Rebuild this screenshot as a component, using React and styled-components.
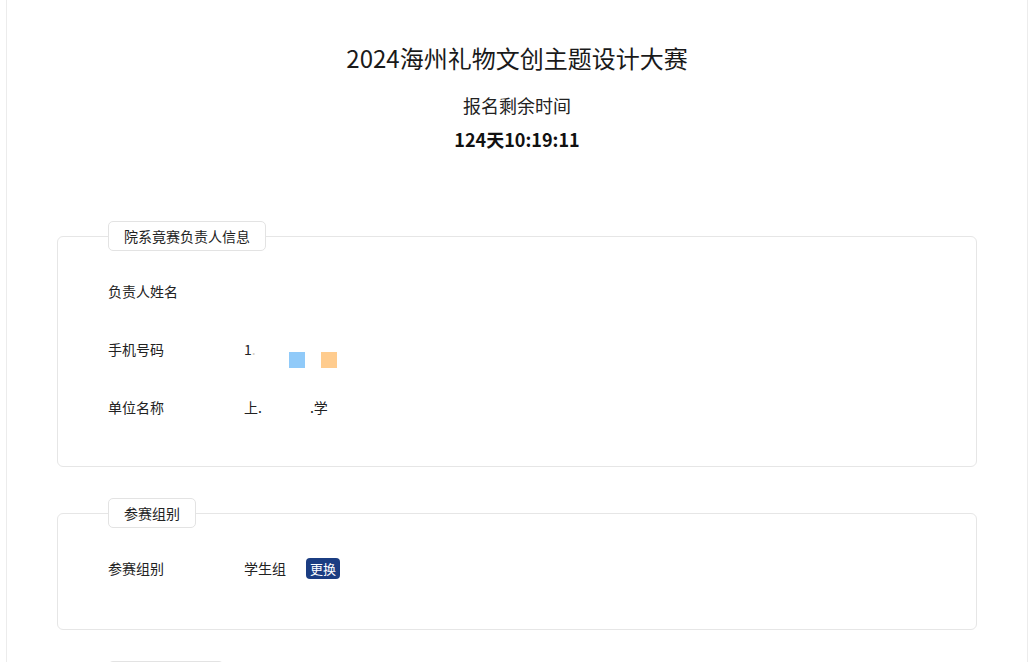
import styled, { createGlobalStyle } from "styled-components";

const GlobalStyle = createGlobalStyle`
  html, body {
    margin: 0;
    padding: 0;
    background: #fff;
  }
  body {
    font-family: "Noto Sans CJK SC", "Noto Sans", sans-serif;
    color: #222;
  }
`;

const Frame = styled.div`
  margin: 0 6px 0 6px;
  min-height: 662px;
  border-left: 1px solid #ececec;
  border-right: 1px solid #ececec;
  padding: 0 50px;
  box-sizing: border-box;
  overflow: hidden;
`;

const Header = styled.header`
  display: flex;
  flex-direction: column;
  align-items: center;
  padding-top: 42px;
  margin-bottom: 85px;
`;

const Title = styled.h1`
  margin: 0;
  font-size: 24px;
  line-height: 32px;
  font-weight: 400;
  color: #1a1a1a;
`;

const Subtitle = styled.div`
  margin-top: 19px;
  font-size: 18px;
  line-height: 24px;
  color: #222;
`;

const Countdown = styled.div`
  margin-top: 10px;
  font-size: 18px;
  line-height: 24px;
  font-weight: 700;
  color: #111;
`;

const Card = styled.section`
  border: 1px solid #e6e6e6;
  border-radius: 6px;
  padding: 0 50px ${(p) => p.$pb || 30}px;
  margin-bottom: 46px;
`;

const Legend = styled.div`
  display: flex;
  align-items: center;
  width: max-content;
  height: 28px;
  margin-top: -16px;
  padding: 0 15px;
  border: 1px solid #e3e3e3;
  border-radius: 5px;
  background: #fff;
  font-size: 14px;
  color: #222;
`;

const Rows = styled.div`
  margin-top: 11px;
`;

const Row = styled.div`
  display: flex;
  align-items: center;
  height: 58px;
  font-size: 14px;
`;

const Label = styled.div`
  width: 136px;
  flex-shrink: 0;
  color: #222;
`;

const Value = styled.div`
  display: flex;
  align-items: center;
  gap: ${(p) => p.$gap || 0}px;
  color: #222;
`;

const Faint = styled.span`
  color: #d8d0c4;
`;

const Swatch = styled.span`
  display: inline-block;
  width: 16px;
  height: 16px;
  margin-top: 22px;
  margin-left: ${(p) => p.$ml}px;
  background: ${(p) => p.$color};
`;

const SwapButton = styled.button`
  height: 21px;
  padding: 0 4px;
  border: none;
  border-radius: 4px;
  background: #1b3d82;
  color: #fff;
  font-family: inherit;
  font-size: 13px;
  line-height: 21px;
  cursor: pointer;
`;

export default function App() {
  return (
    <>
      <GlobalStyle />
      <Frame>
        <Header>
          <Title>2024海州礼物文创主题设计大赛</Title>
          <Subtitle>报名剩余时间</Subtitle>
          <Countdown>124天10:19:11</Countdown>
        </Header>

        <Card>
          <Legend>院系竟赛负责人信息</Legend>
          <Rows>
            <Row>
              <Label>负责人姓名</Label>
              <Value></Value>
            </Row>
            <Row>
              <Label>手机号码</Label>
              <Value>
                1<Faint>.</Faint>
                <Swatch $ml={33} $color="#90caf9" />
                <Swatch $ml={16} $color="#ffcc8e" />
              </Value>
            </Row>
            <Row>
              <Label>单位名称</Label>
              <Value $gap={48}>
                <span>上.</span>
                <span>.学</span>
              </Value>
            </Row>
          </Rows>
        </Card>

        <Card $pb={32}>
          <Legend>参赛组别</Legend>
          <Rows>
            <Row>
              <Label>参赛组别</Label>
              <Value $gap={20}>
                <span>学生组</span>
                <SwapButton>更换</SwapButton>
              </Value>
            </Row>
          </Rows>
        </Card>

        <Card>
          <Legend>参赛作品信息</Legend>
          <Rows>
            <Row>
              <Label>作品名称</Label>
              <Value></Value>
            </Row>
          </Rows>
        </Card>
      </Frame>
    </>
  );
}
